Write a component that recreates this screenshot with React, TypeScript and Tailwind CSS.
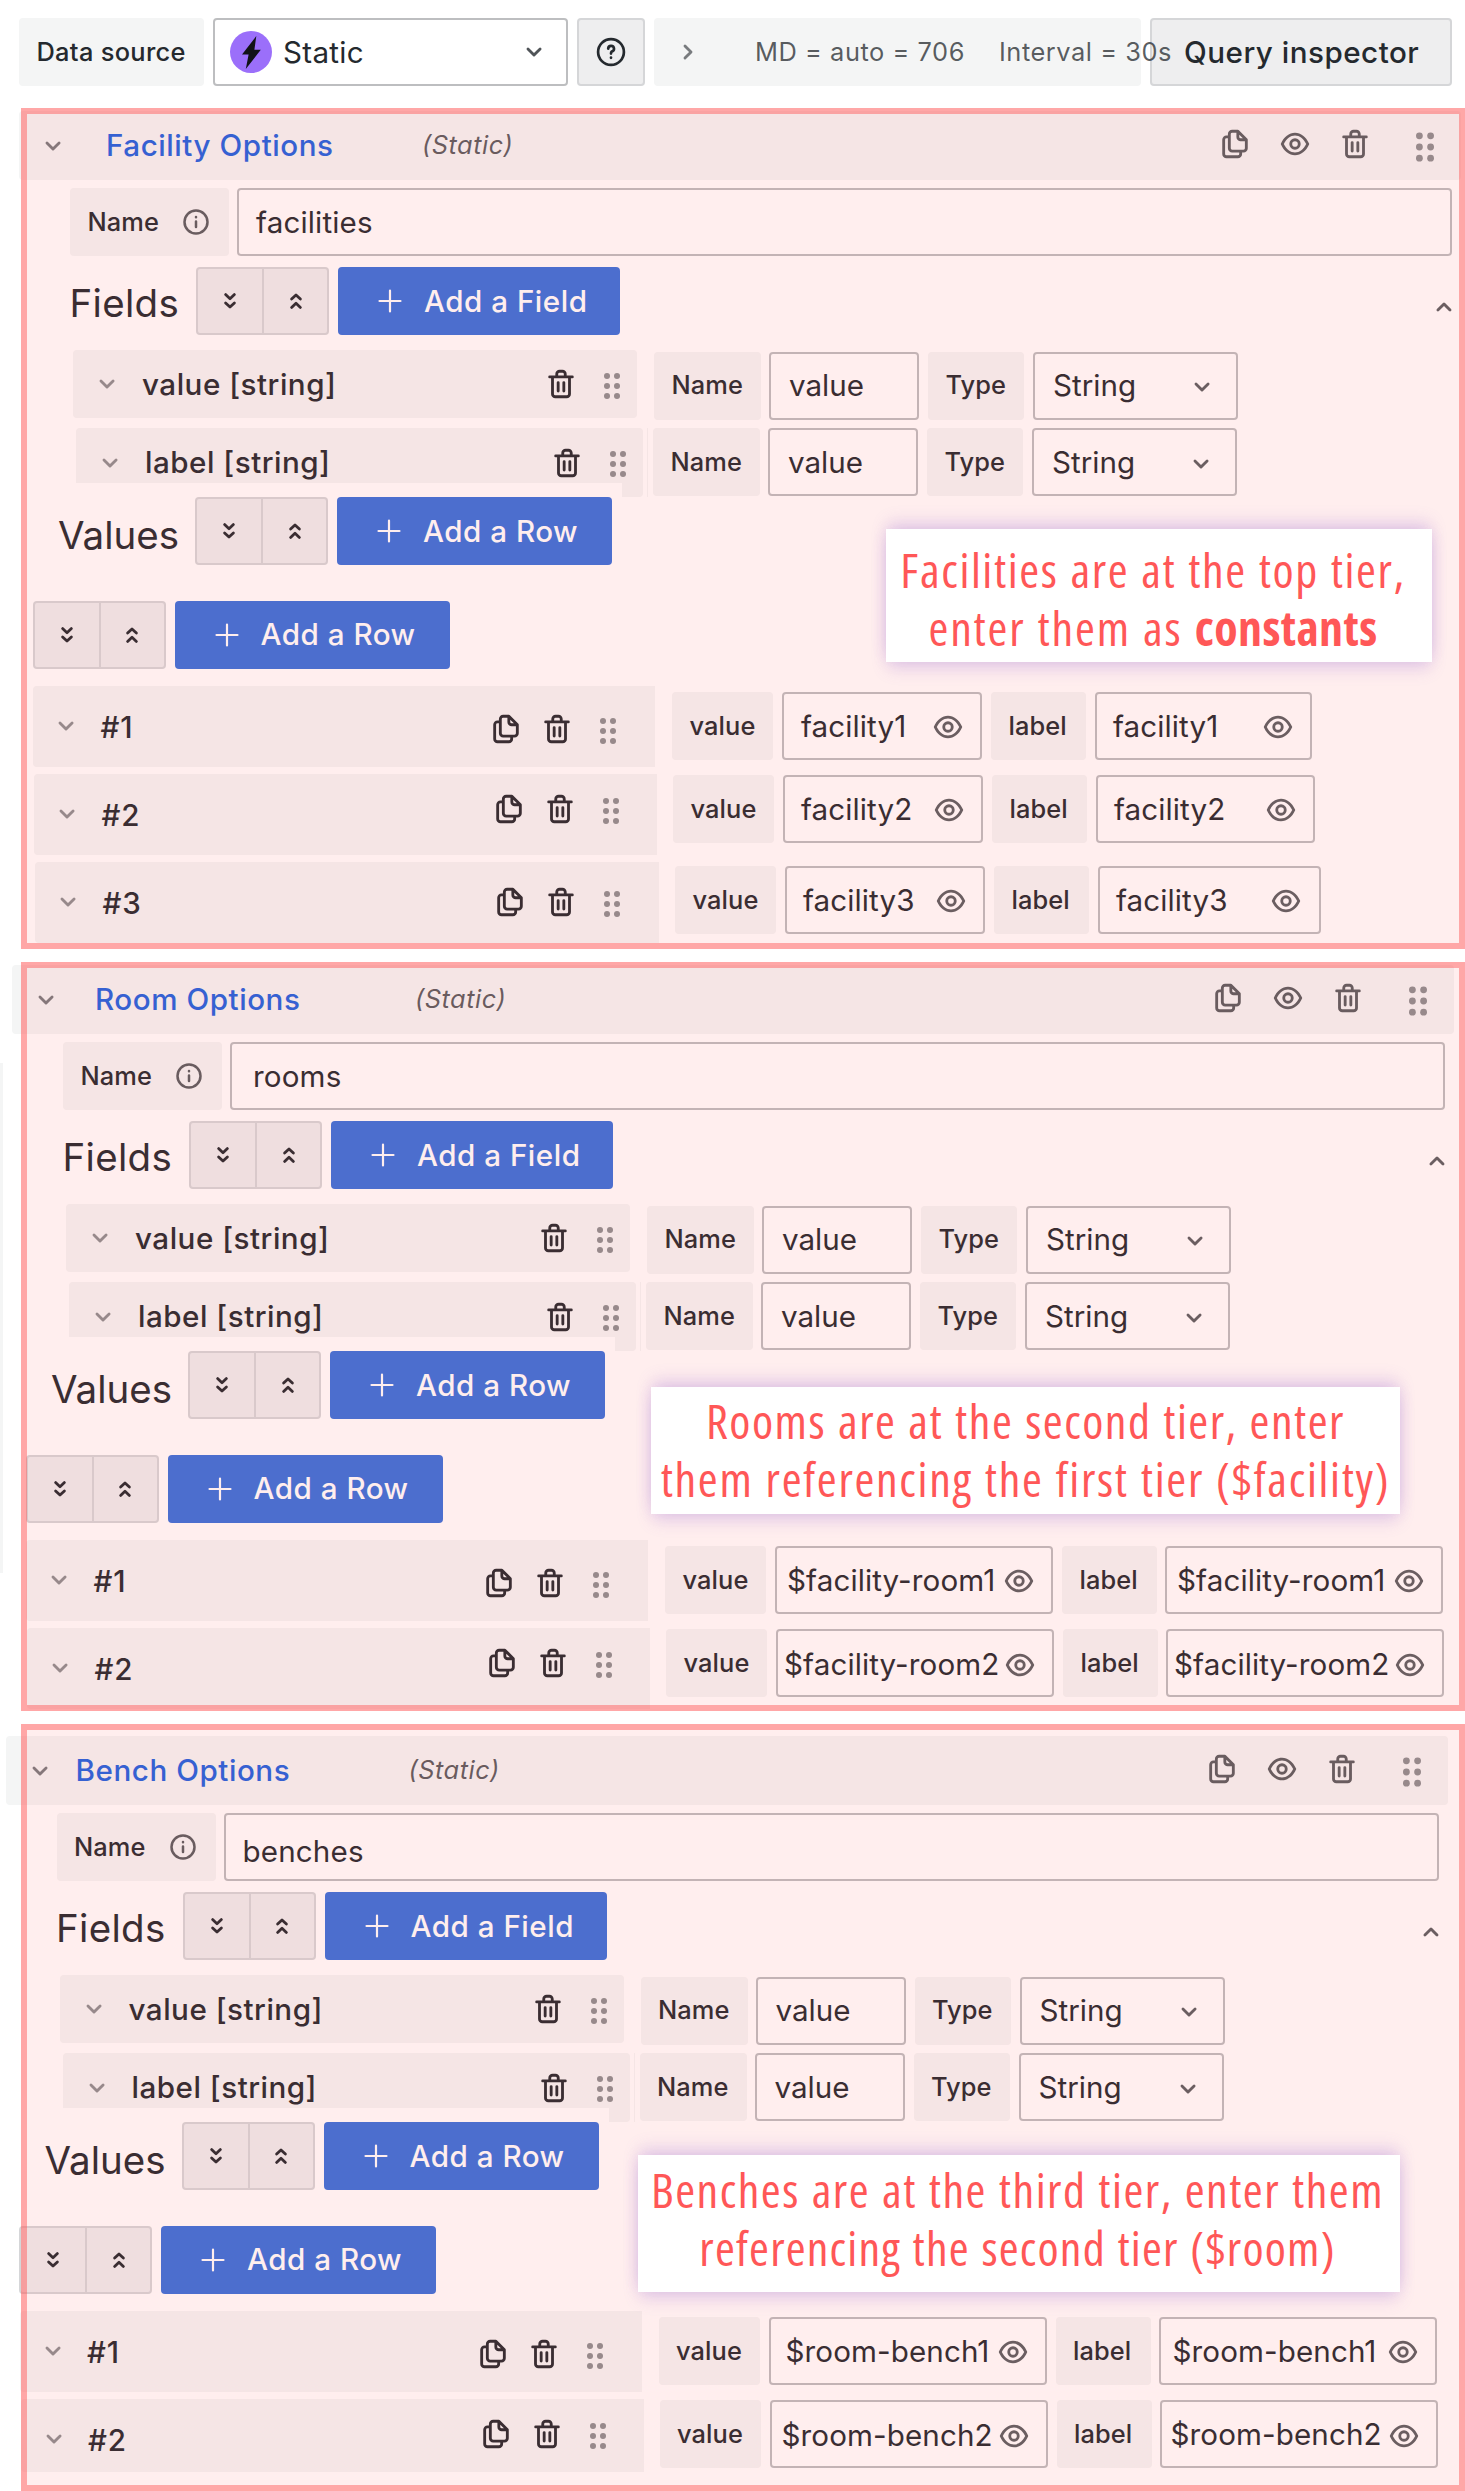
import React from "react";

const PATHS = {
  down: "M17,9.17a1,1,0,0,0-1.41,0L12,12.71,8.46,9.17a1,1,0,0,0-1.41,0,1,1,0,0,0,0,1.42l4.24,4.24a1,1,0,0,0,1.42,0L17,10.59A1,1,0,0,0,17,9.17Z",
  trash:
    "M10,18a1,1,0,0,0,1-1V11a1,1,0,0,0-2,0v6A1,1,0,0,0,10,18ZM20,6H16V5a3,3,0,0,0-3-3H11A3,3,0,0,0,8,5V6H4A1,1,0,0,0,4,8H5V19a3,3,0,0,0,3,3h8a3,3,0,0,0,3-3V8h1a1,1,0,0,0,0-2ZM10,5a1,1,0,0,1,1-1h2a1,1,0,0,1,1,1V6H10Zm7,14a1,1,0,0,1-1,1H8a1,1,0,0,1-1-1V8H17Zm-3-1a1,1,0,0,0,1-1V11a1,1,0,0,0-2,0v6A1,1,0,0,0,14,18Z",
  eye: "M21.92,11.6C19.9,6.91,16.1,4,12,4S4.1,6.91,2.08,11.6a1,1,0,0,0,0,.8C4.1,17.09,7.9,20,12,20s7.9-2.91,9.92-7.6A1,1,0,0,0,21.92,11.6ZM12,18c-3.17,0-6.17-2.29-7.9-6C5.83,8.29,8.83,6,12,6s6.17,2.29,7.9,6C18.17,15.71,15.17,18,12,18ZM12,8a4,4,0,1,0,4,4A4,4,0,0,0,12,8Zm0,6a2,2,0,1,1,2-2A2,2,0,0,1,12,14Z",
  copy: "M21,8.94a1.31,1.31,0,0,0-.06-.27l0-.09a1.07,1.07,0,0,0-.19-.28h0l-6-6h0a1.07,1.07,0,0,0-.28-.19.32.32,0,0,0-.09,0A.88.88,0,0,0,14.05,2H10A3,3,0,0,0,7,5V6H6A3,3,0,0,0,3,9V19a3,3,0,0,0,3,3h8a3,3,0,0,0,3-3V18h1a3,3,0,0,0,3-3V9S21,9,21,8.94ZM15,5.41,17.59,8H16a1,1,0,0,1-1-1ZM15,19a1,1,0,0,1-1,1H6a1,1,0,0,1-1-1V9A1,1,0,0,1,6,8H7v7a3,3,0,0,0,3,3h5Zm4-4a1,1,0,0,1-1,1H10a1,1,0,0,1-1-1V5a1,1,0,0,1,1-1h3V7a3,3,0,0,0,3,3h3Z",
};

function Icon({ name, className = "" }: { name: keyof typeof PATHS; className?: string }) {
  return (
    <svg viewBox="0 0 24 24" fill="currentColor" className={`size-[34px] shrink-0 ${className}`}>
      <path d={PATHS[name]} />
    </svg>
  );
}

function Dots({ big = false, className = "" }: { big?: boolean; className?: string }) {
  const s = big ? 5.6 : 5;
  const v = big ? 11.2 : 10;
  return (
    <svg viewBox="0 0 34 34" fill="currentColor" className={`size-[34px] shrink-0 text-[#24292e]/50 ${className}`}>
      {[-1, 1].map((c) =>
        [-1, 0, 1].map((r) => <circle key={`${c}${r}`} cx={17 + c * s} cy={17 + r * v} r={big ? 3.4 : 3} />)
      )}
    </svg>
  );
}

function DoubleChevron({ up = false }: { up?: boolean }) {
  return (
    <svg
      viewBox="0 0 34 34"
      fill="none"
      stroke="currentColor"
      strokeWidth="2.8"
      strokeLinecap="round"
      strokeLinejoin="round"
      className={`size-[34px] ${up ? "rotate-180" : ""}`}
    >
      <path d="M12.6 10.6 17 14.8 21.4 10.6M12.6 18.9 17 23.1 21.4 18.9" />
    </svg>
  );
}

function FoldButtons() {
  return (
    <div className="flex h-[68px] w-[133px] shrink-0 rounded-[4px] border-2 border-[#24292e]/12 bg-[#24292e]/8">
      <div className="flex w-[66px] items-center justify-center border-r-2 border-[#24292e]/12">
        <DoubleChevron />
      </div>
      <div className="flex flex-1 items-center justify-center">
        <DoubleChevron up />
      </div>
    </div>
  );
}

function AddButton({ label, className }: { label: string; className: string }) {
  return (
    <div
      className={`ml-[9px] flex h-[68px] shrink-0 items-center rounded-[4px] bg-[#3871dc] pl-[40px] text-[29.6px] font-medium tracking-[0.5px] whitespace-nowrap text-white ${className}`}
    >
      <svg viewBox="0 0 24 24" stroke="currentColor" strokeWidth="2.2" strokeLinecap="round" className="mr-[22px] size-[24px]">
        <path d="M1.5 12H22.5M12 1.5V22.5" />
      </svg>
      {label}
    </div>
  );
}

function Tag({ children, className }: { children: React.ReactNode; className: string }) {
  return (
    <div
      className={`flex h-[68px] shrink-0 items-center rounded-[4px] bg-[#f4f5f5] pl-[17.5px] text-[25.4px] font-medium tracking-[0.1px] whitespace-nowrap ${className}`}
    >
      {children}
    </div>
  );
}

const BOX =
  "flex h-[68px] shrink-0 items-center rounded-[4px] border-2 border-[#24292e]/30 text-[29.6px] whitespace-nowrap";

function FieldRow({
  name,
  chip,
  trail,
  fields,
  cut = false,
}: {
  name: string;
  chip: string;
  trail: string;
  fields: string;
  cut?: boolean;
}) {
  return (
    <>
      <div className={`flex shrink-0 items-center bg-[#f4f5f5] ${chip}`}>
        <Icon name="down" className="ml-[17px] text-[#24292e]/50" />
        <span className="ml-[18px] text-[29.6px] font-medium tracking-[0.5px]">{name}</span>
        <Icon name="trash" className="ml-auto" />
        <Dots className={trail} />
      </div>
      {cut && (
        <>
          <div className="h-[69px] w-[21px] shrink-0 rounded-r-[4px] bg-[#f4f5f5]" />
          <div className="ml-[4px] h-[69px] w-px shrink-0 bg-[#f4f5f5]" />
        </>
      )}
      <div className={`flex ${fields}`}>
        <Tag className="w-[107px]">Name</Tag>
        <div className={`${BOX} ml-[8px] w-[150px] pl-[18px]`}>value</div>
        <Tag className="ml-[9px] w-[96px]">Type</Tag>
        <div className={`${BOX} ml-[9px] w-[205px] justify-between pr-[17px] pl-[18px]`}>
          String
          <Icon name="down" className="mt-[3px] text-[#24292e]/75" />
        </div>
      </div>
    </>
  );
}

type Rec = {
  id: string;
  row?: string;
  chip: string;
  tools: string;
  fields: string;
  a: string;
  b: string;
  value: string;
};

function RecordRow({ r }: { r: Rec }) {
  return (
    <div className={`flex h-[81px] items-start ${r.row ?? ""}`}>
      <div className={`flex shrink-0 items-start rounded-l-[4px] bg-[#f4f5f5] ${r.chip}`}>
        <Icon name="down" className="mt-[23px] ml-[16px] text-[#24292e]/50" />
        <span className="ml-[17.5px] text-[29.6px] leading-[82px] font-medium tracking-[0.8px]">{r.id}</span>
        <div className={`ml-auto flex ${r.tools}`}>
          <Icon name="copy" />
          <Icon name="trash" className="ml-[17px]" />
          <Dots className="mt-[2px] ml-[17px]" />
        </div>
      </div>
      <div className={`flex ${r.fields}`}>
        <Tag className="w-[101px]">value</Tag>
        <div className={`${BOX} ml-[9px] justify-between tracking-[0.1px] ${r.a}`}>
          {r.value}
          <Icon name="eye" className="mt-[2px] text-[#24292e]/75" />
        </div>
        <Tag className="ml-[9px] w-[95px]">label</Tag>
        <div className={`${BOX} justify-between tracking-[0.1px] ${r.b}`}>
          {r.value}
          <Icon name="eye" className="mt-[2px] text-[#24292e]/75" />
        </div>
      </div>
    </div>
  );
}

type PanelData = {
  title: string;
  titlePad: string;
  name: string;
  namePad: string;
  section: string;
  content: string;
  rows: Rec[];
  callout: string;
  note: React.ReactNode;
};

function Panel({ p }: { p: PanelData }) {
  return (
    <section className={`relative ${p.section}`}>
      <div className={p.content}>
        <div className="ml-[19px] flex h-[69px] w-[1442px] items-center rounded-[4px] bg-[#f4f5f5]">
          <Icon name="down" className="ml-[17px] text-[#24292e]/60" />
          <div className={`w-[352px] text-[29.6px] font-medium tracking-[0.55px] text-[#1f62e0] ${p.titlePad}`}>{p.title}</div>
          <span className="text-[25.4px] tracking-[0.5px] text-[#24292e]/75 italic">(Static)</span>
          <div className="mr-[19px] ml-auto flex text-[#24292e]/75">
            <Icon name="copy" />
            <Icon name="eye" className="ml-[26px]" />
            <Icon name="trash" className="ml-[26px]" />
            <Dots big className="mt-[3px] ml-[36px]" />
          </div>
        </div>

        <div className="mt-[8px] flex pl-[70px]">
          <Tag className="w-[159px]">
            Name
            <svg
              viewBox="0 0 24 24"
              fill="none"
              stroke="currentColor"
              strokeWidth="2"
              strokeLinecap="round"
              className="ml-[22px] size-[30px] text-[#24292e]/75"
            >
              <circle cx="12" cy="12" r="9.2" />
              <path d="M12 11.5V16M12 8V8.1" />
            </svg>
          </Tag>
          <div className={`${BOX} ml-[8px] w-[1215px] ${p.namePad}`}>
            <span className="tracking-[0.15px]">{p.name}</span>
          </div>
        </div>

        <div className="mt-[11px] flex h-[68px] items-center">
          <div className="w-[196px] pt-[5px] pl-[69.5px] text-[38.5px] tracking-[0.3px]">Fields</div>
          <FoldButtons />
          <AddButton label="Add a Field" className="w-[282px]" />
          <Icon name="down" className="mt-[12px] ml-[807px] rotate-180 text-[#24292e]/75" />
        </div>

        <div className="mt-[15px] flex h-[70px] pl-[73px]">
          <FieldRow
            name="value [string]"
            chip="h-[68px] w-[564px] rounded-[4px]"
            trail="ml-[17px] mr-[8px] mt-[3px]"
            fields="mt-[1.5px] ml-[17px]"
          />
        </div>
        <div className="mt-[8px] flex h-[69px] items-start pl-[76px]">
          <FieldRow
            name="label [string]"
            chip="h-[55px] w-[546px] pt-[14px] rounded-tl-[4px]"
            trail="ml-[17px] -mr-[13px] mt-[3px] relative z-10"
            fields="ml-[5px]"
            cut
          />
        </div>

        <div className="flex h-[68px] items-center">
          <div className="w-[195px] pt-[9px] pl-[58px] text-[38.5px]">Values</div>
          <FoldButtons />
          <AddButton label="Add a Row" className="w-[275px]" />
        </div>
        <div className="mt-[35.5px] flex pl-[32.5px]">
          <FoldButtons />
          <AddButton label="Add a Row" className="w-[275px]" />
        </div>

        <div className="mt-[17.5px] flex flex-col gap-[7px] pl-[33px]">
          {p.rows.map((r) => (
            <RecordRow key={r.id} r={r} />
          ))}
        </div>
      </div>

      <div className="pointer-events-none absolute inset-y-0 right-0 left-[21px] z-20 border-6 border-[#ff5757]/47 bg-[#ff5757]/10" />
      <div
        className={`absolute z-30 bg-white text-center font-['Open_Sans'] text-[48px] leading-[58px] tracking-[1.5px] whitespace-nowrap text-[#ff5757] shadow-[0_9px_16px_-2px_rgba(140,90,210,0.2),0_-9px_16px_-2px_rgba(140,90,210,0.2),0_0_14px_rgba(140,90,210,0.1)] [font-stretch:75%] [word-spacing:1.5px] ${p.callout}`}
      >
        {p.note}
      </div>
    </section>
  );
}

const PANELS: PanelData[] = [
  {
    title: "Facility Options",
    titlePad: "pl-[36px]",
    name: "facilities",
    namePad: "pl-[17px]",
    section: "mt-[22px] h-[841px]",
    content: "pt-[3px]",
    rows: [
      { id: "#1", chip: "h-[81px] w-[622px]", tools: "mt-[26px] mr-[30px]", fields: "mt-[6px] ml-[17px]", a: "w-[200px] pl-[17px] pr-[15px]", b: "ml-[9px] w-[217px] pl-[16px] pr-[15px]", value: "facility1" },
      { id: "#2", row: "pl-[1px]", chip: "h-[81px] w-[623px]", tools: "mt-[18px] mr-[29px]", fields: "mt-[1px] ml-[16px]", a: "w-[200px] pl-[16px] pr-[15px]", b: "ml-[9px] w-[219px] pl-[16px] pr-[15px]", value: "facility2" },
      { id: "#3", row: "pl-[2px]", chip: "h-[81px] w-[624px]", tools: "mt-[23px] mr-[30px]", fields: "mt-[4px] ml-[16px]", a: "w-[200px] pl-[16px] pr-[15px]", b: "ml-[9px] w-[223px] pl-[16px] pr-[16px]", value: "facility3" },
    ],
    callout: "left-[886px] top-[421px] h-[133px] w-[546px] pt-[12px] pr-[12px]",
    note: (
      <>
        <div className="tracking-[1.6px]">Facilities are at the top tier,</div>
        <div className="tracking-[1.8px]">
          enter them as <span className="font-bold tracking-[0.4px]">constants</span>
        </div>
      </>
    ),
  },
  {
    title: "Room Options",
    titlePad: "pl-[32px]",
    name: "rooms",
    namePad: "pl-[21px]",
    section: "mt-[13px] h-[749px]",
    content: "pt-[3px] -ml-[7px]",
    rows: [
      { id: "#1", chip: "h-[81px] w-[622px]", tools: "mt-[26px] mr-[30px]", fields: "mt-[6px] ml-[17px]", a: "w-[278px] pl-[10px] pr-[15px]", b: "ml-[8px] w-[278px] pl-[10px] pr-[15px]", value: "$facility-room1" },
      { id: "#2", row: "pl-[1px]", chip: "h-[81px] w-[623px]", tools: "mt-[18px] mr-[29px]", fields: "mt-[1px] ml-[16px]", a: "w-[278px] pt-[2px] pl-[6px] pr-[15px]", b: "ml-[8px] w-[278px] pt-[2px] pl-[6px] pr-[15px]", value: "$facility-room2" },
    ],
    callout: "left-[651px] top-[425px] h-[127px] w-[749px] pt-[5px]",
    note: (
      <>
        <div>Rooms are at the second tier, enter</div>
        <div className="tracking-[1.7px]">them referencing the first tier ($facility)</div>
      </>
    ),
  },
  {
    title: "Bench Options",
    titlePad: "pl-[19px]",
    name: "benches",
    namePad: "pl-[17px] pt-[8px]",
    section: "mt-[13px] h-[767px]",
    content: "pt-[12px] -ml-[13.5px]",
    rows: [
      { id: "#1", chip: "h-[81px] w-[622px]", tools: "mt-[26px] mr-[30px]", fields: "mt-[6px] ml-[17px]", a: "w-[278px] pl-[15px] pr-[15px]", b: "ml-[8px] w-[278px] pl-[12px] pr-[15px]", value: "$room-bench1" },
      { id: "#2", row: "pl-[1px]", chip: "h-[73px] w-[623px]", tools: "mt-[18px] mr-[29px]", fields: "mt-[1px] ml-[16px]", a: "w-[278px] pt-[2px] pl-[10px] pr-[15px]", b: "ml-[8px] w-[278px] pt-[1px] pl-[9px] pr-[15px]", value: "$room-bench2" },
    ],
    callout: "left-[638px] top-[431px] h-[137px] w-[762px] pt-[6px] pr-[3px]",
    note: (
      <>
        <div>Benches are at the third tier, enter them</div>
        <div className="tracking-[1.2px]">referencing the second tier ($room)</div>
      </>
    ),
  },
];

export default function App() {
  return (
    <div className="relative h-[2491px] w-[1465px] overflow-hidden bg-white pt-[18px] font-['Inter',sans-serif] text-[#24292e]">
      <div className="flex h-[68px] pl-[19px]">
        <Tag className="w-[185px]">
          <span className="tracking-[0.3px]">Data source</span>
        </Tag>
        <div className={`${BOX} ml-[9px] w-[355px] pr-[15px] pl-[15px]`}>
          <svg viewBox="0 0 42 42" className="mr-[11px] size-[42px]">
            <circle cx="21" cy="21" r="21" fill="#9b6ffa" />
            <path d="M26.3 5 12 23.6H18.6L15.8 38 30.8 18.8H24.4Z" fill="#111217" />
          </svg>
          <span className="tracking-[0.3px]">Static</span>
          <Icon name="down" className="ml-auto text-[#24292e]/80" />
        </div>
        <div className="ml-[9px] flex w-[68px] items-center justify-center rounded-[4px] border-2 border-[#24292e]/12 bg-[#24292e]/8">
          <svg viewBox="0 0 34 34" fill="none" stroke="currentColor" strokeWidth="2.7" strokeLinecap="round" className="size-[34px]">
            <circle cx="17" cy="17" r="12.9" />
            <path d="M14.2 13.6A2.9 2.9 0 1 1 17.6 16.6Q17 17 17 18.6M17 22.6V22.8" />
          </svg>
        </div>
        <div className="ml-[9px] flex w-[487px] items-center rounded-[4px] bg-[#f4f5f5] pl-[17px] text-[25.4px] tracking-[0.55px] whitespace-nowrap text-[#24292e]/75">
          <Icon name="down" className="-rotate-90 text-[#24292e]/60" />
          <span className="ml-[50px]">MD = auto = 706</span>
          <span className="relative z-10 ml-[34px]">Interval = 30s</span>
        </div>
        <div className="ml-[9px] flex w-[302px] items-center rounded-[4px] border-2 border-[#24292e]/12 bg-[#24292e]/8 pl-[32px] text-[29.6px] font-medium tracking-[0.5px] whitespace-nowrap">
          Query inspector
        </div>
      </div>
      {PANELS.map((p) => (
        <Panel key={p.title} p={p} />
      ))}
      <div className="absolute top-[1063px] left-0 h-[510px] w-[3px] bg-[#f4f5f5]" />
    </div>
  );
}
